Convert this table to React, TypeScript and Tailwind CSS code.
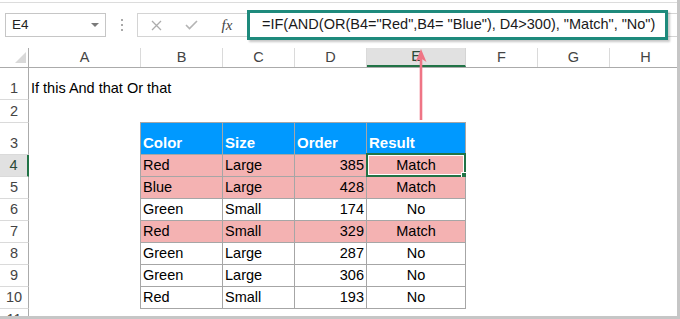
import React from "react";

// Excel sheet: formula bar, headers, and the small Color/Size/Order/Result table.

const COLUMNS = [
  { id: "A", w: "w-[112px]" },
  { id: "B", w: "w-[82px]" },
  { id: "C", w: "w-[72px]" },
  { id: "D", w: "w-[72px]" },
  { id: "E", w: "w-[99px]" },
  { id: "F", w: "w-[72px]" },
  { id: "G", w: "w-[72px]" },
  { id: "H", w: "w-[72px]" },
];

const ROW_HEADS = [
  { n: 1, h: "h-[32px]" },
  { n: 2, h: "h-[23px]" },
  { n: 3, h: "h-[32px]" },
  { n: 4, h: "h-[22px]" },
  { n: 5, h: "h-[22px]" },
  { n: 6, h: "h-[22px]" },
  { n: 7, h: "h-[22px]" },
  { n: 8, h: "h-[22px]" },
  { n: 9, h: "h-[22px]" },
  { n: 10, h: "h-[22px]" },
  { n: 11, h: "h-[22px]" },
];

type Row = { color: string; size: string; order: number; result: string };

const HEADERS = ["Color", "Size", "Order", "Result"];

const DATA: Row[] = [
  { color: "Red", size: "Large", order: 385, result: "Match" },
  { color: "Blue", size: "Large", order: 428, result: "Match" },
  { color: "Green", size: "Small", order: 174, result: "No" },
  { color: "Red", size: "Small", order: 329, result: "Match" },
  { color: "Green", size: "Large", order: 287, result: "No" },
  { color: "Green", size: "Large", order: 306, result: "No" },
  { color: "Red", size: "Small", order: 193, result: "No" },
];

const FORMULA = '=IF(AND(OR(B4="Red",B4= "Blue"), D4>300), "Match", "No")';

function FormulaBar() {
  return (
    <div className="flex h-[24px] items-center pl-[5px]">
      {/* Name box */}
      <div className="flex h-[24px] w-[101px] items-center justify-between border border-[#c6c6c6] pl-[6px] pr-[6px]">
        <span className="text-[13.5px] text-[#222]">E4</span>
        <svg width="8" height="4" viewBox="0 0 8 4" aria-hidden>
          <polygon points="0,0 8,0 4,4" fill="#7a7a7a" />
        </svg>
      </div>

      {/* grip dots */}
      <div className="flex w-[31px] flex-col items-center justify-center gap-[3px]">
        <span className="block h-[2px] w-[2px] bg-[#a9a9a9]" />
        <span className="block h-[2px] w-[2px] bg-[#a9a9a9]" />
        <span className="block h-[2px] w-[2px] bg-[#a9a9a9]" />
      </div>

      {/* Formula input */}
      <div className="flex h-[24px] flex-1 items-center border border-r-0 border-[#d4d4d4]">
        <div className="flex w-[36px] justify-center">
          <svg width="11" height="11" viewBox="0 0 11 11" aria-hidden>
            <path d="M1 1 L10 10 M10 1 L1 10" stroke="#acacac" strokeWidth="1.3" />
          </svg>
        </div>
        <div className="flex w-[35px] justify-center">
          <svg width="13" height="10" viewBox="0 0 13 10" aria-hidden>
            <path d="M1 5 L4.5 8.5 L12 1" stroke="#b4b4b4" strokeWidth="1.6" fill="none" />
          </svg>
        </div>
        <div className="flex w-[36px] justify-center">
          <span className="font-['Liberation_Serif',serif] text-[15px] italic text-[#444]">fx</span>
        </div>
        <div className="ml-[2px] flex h-[30px] w-[421px] items-center border-[3px] border-[#1e8a7c] bg-white pl-[12px] shadow-[2px_2px_2px_rgba(0,0,0,0.22)]">
          <span className="whitespace-nowrap text-[14.5px] text-[#1a1a1a]">{FORMULA}</span>
        </div>
      </div>
    </div>
  );
}

function ColumnHeaders() {
  return (
    <div className="flex h-[20px] border-b border-[#ababab]">
      <div className="relative w-[29px] shrink-0 border-r border-[#ababab]">
        <svg className="absolute left-[15px] top-[4px]" width="11" height="11" viewBox="0 0 11 11" aria-hidden>
          <polygon points="11,0 11,11 0,11" fill="#d9d9d9" />
        </svg>
      </div>
      {COLUMNS.map((c) =>
        c.id === "E" ? (
          <div
            key={c.id}
            className={`${c.w} flex shrink-0 items-center justify-center border-b-2 border-r border-b-[#217346] border-r-[#d4d4d4] bg-[#e1e1e1] text-[14.5px] text-[#2b4a38]`}
          >
            {c.id}
          </div>
        ) : (
          <div
            key={c.id}
            className={`${c.w} flex shrink-0 items-center justify-center border-r border-[#dadada] text-[14.5px] text-[#444]`}
          >
            {c.id}
          </div>
        )
      )}
    </div>
  );
}

function RowHeaders() {
  return (
    <div className="flex w-[29px] shrink-0 flex-col">
      {ROW_HEADS.map((r) =>
        r.n === 4 ? (
          <div
            key={r.n}
            className={`${r.h} flex shrink-0 items-end justify-center border-b border-r-2 border-b-[#dadada] border-r-[#217346] bg-[#e1e1e1] pb-[2px] text-[14.5px] leading-[17px] text-[#2b4a38]`}
          >
            {r.n}
          </div>
        ) : (
          <div
            key={r.n}
            className={`${r.h} flex shrink-0 items-end justify-center border-b border-r border-b-[#dadada] border-r-[#ababab] pb-[2px] text-[14.5px] leading-[17px] text-[#444]`}
          >
            {r.n}
          </div>
        )
      )}
    </div>
  );
}

function DataTable() {
  return (
    <div className="grid w-[326px] grid-cols-[82px_72px_72px_99px] border-l border-t border-[#a6a6a6]">
      {HEADERS.map((h) => (
        <div
          key={h}
          className="flex h-[32px] items-end border-b border-r border-[#a6a6a6] bg-[#0099ff] pb-[2px] pl-[2px] text-[15px] font-bold leading-[18px] text-white"
        >
          {h}
        </div>
      ))}
      {DATA.map((r, i) => {
        const bg = r.result === "Match" ? "bg-[#f4b2b2]" : "bg-white";
        const cell = `flex h-[22px] items-end border-b border-r border-[#a6a6a6] pb-[2px] text-[14.5px] leading-[17px] text-black ${bg}`;
        return (
          <React.Fragment key={i}>
            <div className={`${cell} pl-[2px]`}>{r.color}</div>
            <div className={`${cell} pl-[2px]`}>{r.size}</div>
            <div className={`${cell} justify-end pr-[2px]`}>{r.order}</div>
            <div className={`${cell} relative justify-center`}>
              {r.result}
              {i === 0 ? (
                <>
                  <span className="pointer-events-none absolute -bottom-[1px] -left-[1px] -right-[1px] -top-[2px] border-2 border-[#217346] shadow-[inset_0_0_0_1px_white]" />
                  <span className="absolute -bottom-[2px] -right-[2px] h-[6px] w-[6px] border border-white bg-[#217346]" />
                </>
              ) : null}
            </div>
          </React.Fragment>
        );
      })}
    </div>
  );
}

export default function App() {
  return (
    <div className="relative h-[319px] w-[680px] overflow-hidden border-b-[3px] border-r-[3px] border-[#c6c6c6] bg-white font-['Liberation_Sans',Arial,sans-serif]">
      <div className="mt-[2px] h-px bg-[#dcdcdc]" />
      <div className="pt-[10px]">
        <FormulaBar />
      </div>
      <div className="mt-[11px]">
        <ColumnHeaders />
        <div className="flex">
          <RowHeaders />
          <div className="flex flex-col">
            <div className="flex h-[32px] items-end pb-[3px] pl-[2px]">
              <span className="whitespace-nowrap text-[14.5px] leading-[17px] text-black">
                If this And that Or that
              </span>
            </div>
            <div className="h-[22px]" />
            <div className="pl-[111px]">
              <DataTable />
            </div>
          </div>
        </div>
      </div>

      {/* annotation arrow from E4 up to the formula */}
      <svg
        className="pointer-events-none absolute left-[411px] top-[46px]"
        width="20"
        height="78"
        viewBox="0 0 20 78"
        aria-hidden
      >
        <line x1="10" y1="10" x2="10" y2="74" stroke="#ef7585" strokeWidth="2.6" />
        <polygon points="10,3 4.5,16 10,12.5 15.5,16" fill="#ef7585" />
      </svg>
    </div>
  );
}
